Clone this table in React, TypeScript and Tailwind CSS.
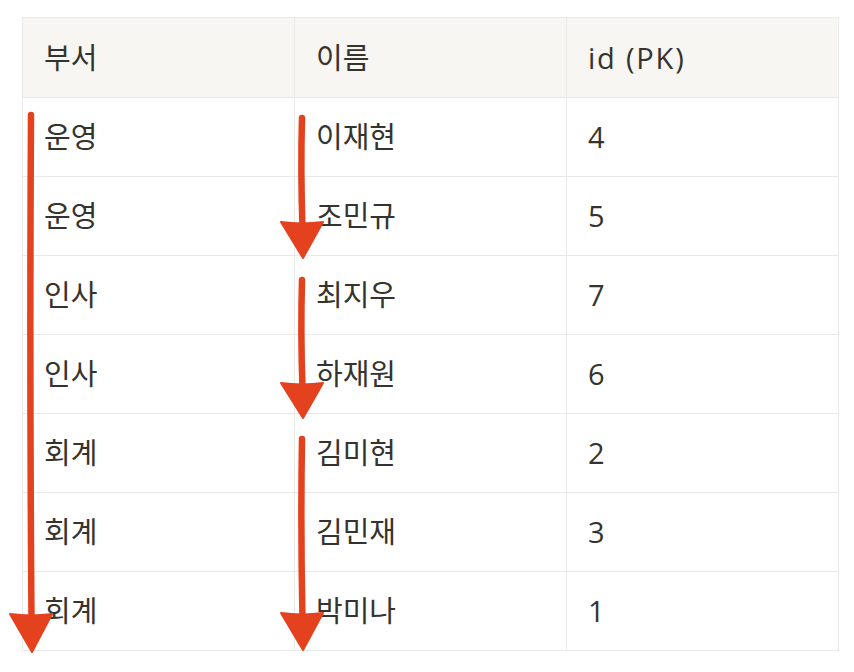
import React from "react";

const rows: [string, string, string][] = [
  ["운영", "이재현", "4"],
  ["운영", "조민규", "5"],
  ["인사", "최지우", "7"],
  ["인사", "하재원", "6"],
  ["회계", "김미현", "2"],
  ["회계", "김민재", "3"],
  ["회계", "박미나", "1"],
];

const font = {
  fontFamily: '"Open Sans", "Noto Sans CJK KR", sans-serif',
};

function Arrow({ x, y1, y2, headTop }: { x: number; y1: number; y2: number; headTop: number }) {
  const tip = y2;
  const mid = (y1 + headTop) / 2;
  return (
    <g>
      <path
        d={`M ${x} ${y1} Q ${x - 1.5} ${mid} ${x + 0.5} ${headTop + 6}`}
        stroke="#e4411f"
        strokeWidth={6.5}
        strokeLinecap="round"
        fill="none"
      />
      <path
        d={`M ${x - 21} ${headTop} Q ${x} ${headTop + 3} ${x + 21} ${headTop} L ${x + 1} ${tip} Z`}
        fill="#e4411f"
        stroke="#e4411f"
        strokeWidth={2}
        strokeLinejoin="round"
      />
    </g>
  );
}

export default function App() {
  return (
    <div className="relative w-[854px] h-[672px] bg-white overflow-hidden" style={font}>
      <div className="pt-[17px] pl-[22px]">
        <table className="border-collapse table-fixed w-[816px] text-[29px] text-[#35332e]">
          <colgroup>
            <col className="w-[272px]" />
            <col className="w-[272px]" />
            <col className="w-[272px]" />
          </colgroup>
          <thead>
            <tr className="h-[80px] bg-[#f7f6f3]">
              <th className="border border-[#e9e9e7] text-left font-normal pl-[21px]">부서</th>
              <th className="border border-[#e9e9e7] text-left font-normal pl-[21px]">이름</th>
              <th className="border border-[#e9e9e7] text-left font-normal pl-[21px] tracking-[1.8px]">id (PK)</th>
            </tr>
          </thead>
          <tbody>
            {rows.map((r, i) => (
              <tr key={i} className="h-[79px]">
                {r.map((c, j) => (
                  <td key={j} className="border border-[#e9e9e7] pl-[21px]">
                    {c}
                  </td>
                ))}
              </tr>
            ))}
          </tbody>
        </table>
      </div>
      <svg className="absolute left-0 top-0" width={854} height={672} viewBox="0 0 854 672">
        <Arrow x={31} y1={115} y2={652} headTop={614} />
        <Arrow x={302} y1={118} y2={258} headTop={222} />
        <Arrow x={302} y1={280} y2={418} headTop={383} />
        <Arrow x={302} y1={439} y2={650} headTop={613} />
      </svg>
    </div>
  );
}
